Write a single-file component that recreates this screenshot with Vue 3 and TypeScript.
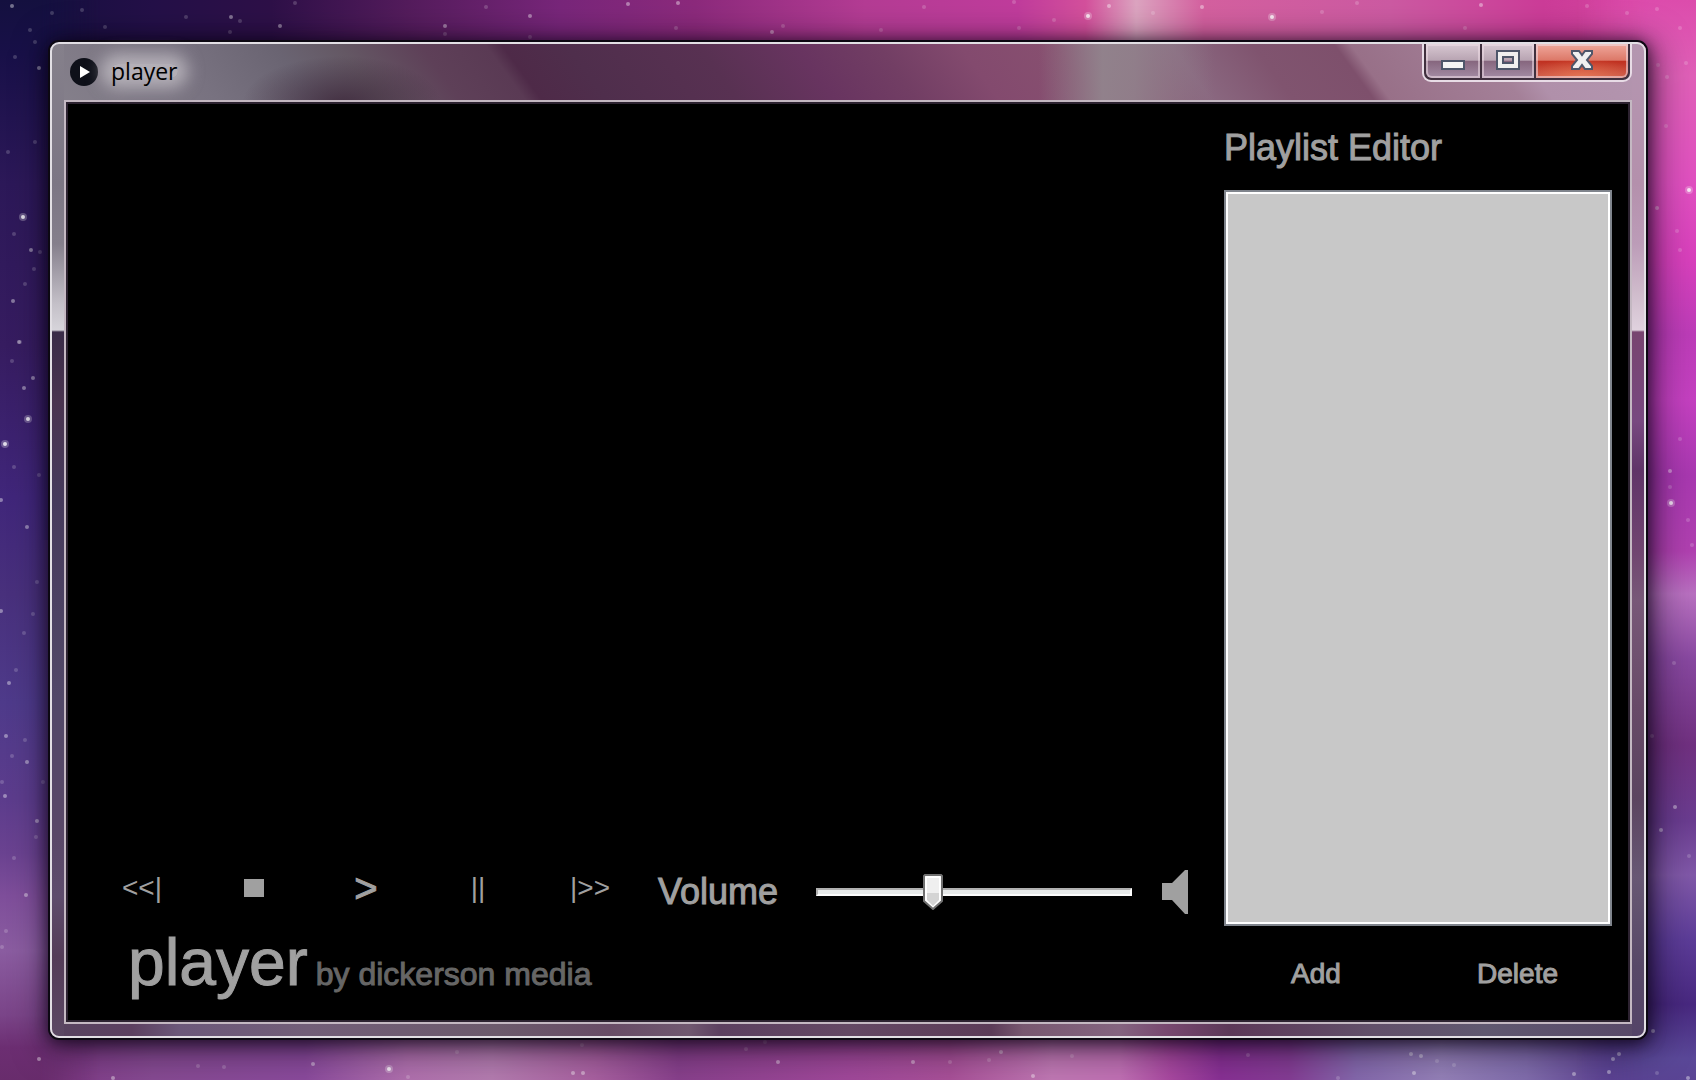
<script setup lang="ts">
import { ref } from 'vue'

interface TransportButton {
  id: string
  label: string
  glyph: string
}

const transport: TransportButton[] = [
  { id: 'previous', label: 'Previous', glyph: '<<|' },
  { id: 'stop', label: 'Stop', glyph: '' },
  { id: 'play', label: 'Play', glyph: '>' },
  { id: 'pause', label: 'Pause', glyph: '||' },
  { id: 'next', label: 'Next', glyph: '|>>' },
]

const volume = ref<number>(36)
const tracks = ref<string[]>([])

// Wallpaper stars, grouped by brightness: [x, y]
const faintStars: [number, number][] = [
  [52, 13], [82, 10], [105, 27], [186, 17], [240, 21], [230, 32], [295, 3], [445, 34], [486, 7], [530, 37],
  [15, 57], [35, 42], [30, 30], [35, 142], [8, 152], [14, 234], [40, 252], [34, 269], [25, 284], [20, 342],
  [676, 28], [783, 26], [881, 30], [924, 7], [1014, 2], [1054, 20], [1019, 28], [1153, 13], [1322, 12],
  [1357, 3], [1465, 28], [1587, 6], [1627, 13], [1657, 9], [1680, 28], [1658, 65], [1667, 77], [1686, 63],
  [1666, 126], [1677, 231], [1680, 250], [12, 361], [14, 467], [39, 475], [37, 582], [33, 614], [24, 633],
  [16, 670], [25, 740], [12, 756], [2, 782], [43, 782], [36, 837], [14, 858], [6, 931], [2, 947],
  [1680, 439], [1670, 487], [1688, 520], [1692, 545], [1674, 663], [1652, 736], [1689, 856],
  [198, 1066], [224, 1067], [408, 1077], [582, 1045], [746, 1049], [765, 1042], [457, 1052],
  [989, 1060], [950, 1062], [1072, 1056], [1248, 1055], [1437, 1061], [1454, 1065], [1338, 1078], [1657, 1073],
]
const clearStars: [number, number][] = [
  [12, 6], [280, 26], [530, 16], [39, 68], [31, 250], [628, 4], [678, 3], [1202, 7], [1657, 208], [19, 342],
  [33, 378], [24, 388], [27, 527], [9, 683], [6, 736], [27, 762], [5, 796], [37, 821], [1670, 471],
  [1675, 807], [1653, 1031], [113, 1078], [313, 1064], [573, 1073], [583, 1073], [913, 1062], [1033, 1076],
  [1411, 1054], [1421, 1056], [1414, 1073], [1574, 1074], [1609, 1072], [1613, 1059], [1619, 1054], [1688, 1078],
  [26, 895], [39, 1059], [778, 1062], [1001, 1052], [1661, 830], [1, 500], [1, 611], [772, 32], [1109, 6],
  [231, 17], [445, 26], [13, 301], [1481, 5],
]
const brightStars: [number, number][] = [
  [23, 217], [28, 419], [5, 444], [1088, 16], [1272, 17], [1689, 190], [1671, 503], [389, 1069],
]
</script>

<template>
  <div class="desktop">
    <div class="wallpaper" aria-hidden="true">
      <div class="sky sky-bottom"></div>
      <div class="sky sky-left"></div>
      <div class="sky sky-right"></div>
      <svg class="stars" viewBox="0 0 1696 1080" preserveAspectRatio="xMidYMid slice">
        <g fill="#fff" opacity=".18">
          <circle v-for="([x, y], i) in faintStars" :key="i" :cx="x" :cy="y" r="2" />
        </g>
        <g fill="#fff" opacity=".4">
          <circle v-for="([x, y], i) in clearStars" :key="i" :cx="x" :cy="y" r="2" />
        </g>
        <g fill="#fff">
          <circle v-for="([x, y], i) in brightStars" :key="i" :cx="x" :cy="y" r="4" opacity=".25" />
          <circle v-for="([x, y], i) in brightStars" :key="i" :cx="x" :cy="y" r="2" opacity=".8" />
        </g>
      </svg>
    </div>

    <main class="window">
      <header class="titlebar">
        <svg class="app-icon" viewBox="0 0 28 28" aria-hidden="true">
          <circle cx="14" cy="14" r="14" fill="#0e1019" />
          <path d="M10 8 20 14 10 20Z" fill="#fff" />
        </svg>
        <h1 class="title">player</h1>
        <div class="caption">
          <button class="cap cap-min" type="button" aria-label="Minimize">
            <svg viewBox="0 0 24 20"><rect x="1" y="11" width="22" height="8" fill="#f4f4f4" stroke="#4e566a" stroke-width="2" /></svg>
          </button>
          <button class="cap cap-max" type="button" aria-label="Maximize">
            <svg viewBox="0 0 24 20">
              <path d="M1 1h22v18H1ZM7 7v6h10V7Z" fill="#f0f0f0" fill-rule="evenodd" stroke="#4e566a" stroke-width="2" />
            </svg>
          </button>
          <button class="cap cap-close" type="button" aria-label="Close">
            <svg viewBox="0 0 24 20">
              <path d="M2 1H9L12 5 15 1h7v3l-5 6 5 6v3h-7l-3-4-3 4H2v-3l5-6-5-6Z" fill="#f0f0f0" stroke="#4e566a" stroke-width="2" />
            </svg>
          </button>
        </div>
      </header>

      <div class="client">
        <section class="deck">
          <div class="screen"></div>
          <div class="controls">
            <div class="transport">
              <button
                v-for="b in transport"
                :key="b.id"
                type="button"
                :class="['key', 'key-' + b.id]"
                :aria-label="b.label"
              >
                <template v-if="b.glyph">{{ b.glyph }}</template>
                <span v-else class="stop-mark"></span>
              </button>
            </div>
            <label class="volume-label" for="volume">Volume</label>
            <input id="volume" v-model.number="volume" class="volume" type="range" min="0" max="100" />
            <svg class="speaker" viewBox="0 0 26 44" aria-hidden="true">
              <path d="M0 13h10L23 0h3v44h-3L10 30H0Z" fill="#a0a0a0" />
            </svg>
          </div>
          <p class="brand">
            <span class="brand-name">player</span>
            <span class="brand-by">by dickerson media</span>
          </p>
        </section>

        <section class="playlist">
          <label class="heading" for="tracks">Playlist Editor</label>
          <select id="tracks" class="tracks" size="12">
            <option v-for="t in tracks" :key="t">{{ t }}</option>
          </select>
          <div class="actions">
            <button class="action" type="button">Add</button>
            <button class="action" type="button">Delete</button>
          </div>
        </section>
      </div>
    </main>
  </div>
</template>

<style>
body {
  margin: 0;
  background: #14103f;
}
</style>

<style scoped>
* {
  box-sizing: border-box;
}

.desktop {
  position: relative;
  display: flex;
  min-height: 100vh;
  padding: 42px 50px;
  font-family: "Liberation Sans", Arial, sans-serif;
  color: #a0a0a0;
}

button {
  margin: 0;
  padding: 0;
  border: 0;
  background: none;
  color: inherit;
  font-family: inherit;
}

/* Wallpaper */
.wallpaper {
  position: absolute;
  inset: 0;
  overflow: hidden;
  background: linear-gradient(90deg, #14103f 0%, #241048 9%, #2e1048 16%, #541c5c 24%, #78267a 33%, #8c2a7c 41%, #b43c94 51%, #c03c9c 60%, #d4509c 64%, #dca4c0 67%, #d4609f 71%, #cc5aa2 82%, #cc3c98 91%, #da4aa6 100%);
}

.sky {
  position: absolute;
}

.sky-bottom {
  inset: 50% 0 0;
  background: linear-gradient(90deg, #6e3075 0%, #803c88 4%, #864a92 9%, #8a4a9c 18%, #b070ae 24%, #b47cb0 29%, #a860a0 35%, #88408c 40%, #a0489a 50%, #a85098 56%, #c078b4 62%, #c070b4 66%, #a848a0 69%, #883094 72%, #843c94 76%, #8468ac 80%, #9480b8 85%, #806cac 90%, #5c4090 95%, #5c3c8c 100%);
}

.sky-left {
  inset: 0 auto 0 0;
  width: 100px;
  background: linear-gradient(180deg, #14103f 0%, #181048 5%, #2c1858 17%, #361c60 32%, #40267a 46%, #48307c 55%, #4e3a8a 65%, #5c3c8c 74%, #6a4290 79%, #7e4e9a 83%, #8a5ca0 88%, #7a4488 94%, #6c2e72 97%, #682c6c 100%);
  mask-image: linear-gradient(90deg, #000 40%, transparent);
}

.sky-right {
  inset: 0 0 0 auto;
  width: 120px;
  background: linear-gradient(180deg, #dc4cac 0%, #e060b8 7%, #e050c0 17%, #d840bc 24%, #bc3cb8 31%, #c440c0 37%, #a838b0 44%, #b040b0 51%, #b870c0 55%, #8848a0 61%, #703080 69%, #6a3c90 76%, #8058a8 81%, #5c3c98 87%, #482880 93%, #5a4898 98%, #5a4494 100%);
  mask-image: linear-gradient(270deg, #000 40%, transparent);
}

.stars {
  position: absolute;
  inset: 0;
  width: 100%;
  height: 100%;
}

/* Window frame */
.window {
  position: relative;
  display: flex;
  flex: 1;
  flex-direction: column;
  padding: 0 12px 12px;
  border: 2px solid #e2dfe4;
  border-radius: 9px;
  background:
    linear-gradient(180deg, #85808b 0, #7c7684 140px, #857f8c 200px, #c4c0c8 260px, #d6d4da 286px, #3a2c48 288px, #4a3450 36%, #463a5c 46%, #524868 66%, #5a4868 80%, #5e4c6c 86%, #543c58 92%, #5c4864 100%) 0 0 / 12px 100% no-repeat,
    linear-gradient(180deg, #b496b0 0, #b490ac 140px, #bc9cb8 200px, #d0bccc 250px, #e0d2de 286px, #784470 288px, #784880 38%, #603468 43%, #704470 51%, #785878 56%, #684a68 67%, #5c4460 76%, #685874 84%, #584868 93%, #544468 100%) 100% 0 / 12px 100% no-repeat,
    radial-gradient(ellipse 100px 48px at 290px 60px, rgba(52, 28, 48, .7), transparent) 0 0 / 100% 56px no-repeat,
    linear-gradient(90deg, transparent 62%, rgba(146, 134, 142, .9) 66%, rgba(146, 134, 142, .8) 68%, transparent 73%) 0 0 / 100% 56px no-repeat,
    linear-gradient(54deg, #85808b 0%, #787280 10%, #6a6472 16%, #645864 20%, #5e4058 25%, #5a3a54 29%, #4e2a48 30%, #4f2e4c 34%, #583152 42%, #683460 48%, #723e64 53%, #834a6e 58%, #885070 64%, #8a6880 71%, #80546f 76%, #7e506c 81%, #987088 82%, #a48098 90%, #b090aa 92%, #b496b0 100%) 0 0 / 100% 56px no-repeat,
    linear-gradient(90deg, #584460 0%, #5c4060 5%, #6c587a 8%, #725e78 16%, #6c5a6c 28%, #684c66 35%, #705870 40%, #5c4060 42%, #644864 50%, #5c3c58 59%, #785870 61%, #846480 67%, #784870 70%, #5c3858 74%, #62506a 83%, #605870 90%, #584868 100%);
  box-shadow:
    0 0 0 2px #0c0812,
    0 2px 16px 2px rgba(8, 0, 16, .7),
    4px 6px 36px 4px rgba(8, 0, 16, .6);
}

.titlebar {
  display: flex;
  height: 56px;
  padding-left: 6px;
}

.app-icon {
  width: 28px;
  height: 28px;
  margin-top: 14px;
}

.title {
  position: relative;
  z-index: 0;
  align-self: flex-start;
  margin: 11px 0 0 13px;
  color: #000;
  font: 400 23px/32px "Open Sans", "Noto Sans", sans-serif;
}

.title::before {
  position: absolute;
  z-index: -1;
  inset: 9px 0;
  border-radius: 12px;
  background: rgba(226, 222, 226, .55);
  box-shadow: 0 0 16px 10px rgba(226, 222, 226, .55);
  content: "";
}

.caption {
  display: flex;
  height: 38px;
  margin-left: auto;
  border: 2px solid #e8dce6;
  border-top: 0;
  border-radius: 0 0 9px 9px;
  background: #40303e;
  padding: 0 2px 2px;
  gap: 2px;
}

.cap {
  display: flex;
  align-items: center;
  justify-content: center;
  padding-bottom: 2px;
  box-shadow: inset 0 0 0 2px rgba(240, 222, 232, .55);
  background: linear-gradient(180deg, #d8c8d2 0%, #b8a4b2 48%, #86667e 50%, #a48ca4 100%);
}

.cap svg {
  width: 24px;
  height: 20px;
}

.cap-min {
  width: 54px;
  border-bottom-left-radius: 6px;
}

.cap-max {
  width: 52px;
}

.cap-close {
  width: 92px;
  border-bottom-right-radius: 6px;
  background: radial-gradient(ellipse 60% 60% at 50% 100%, rgba(240, 130, 90, .7), transparent), linear-gradient(180deg, #f0a89c 0%, #dc7868 48%, #c03020 50%, #cc5c4c 100%);
}

/* Client area */
.client {
  display: grid;
  flex: 1;
  grid-template-columns: minmax(0, 1fr) 388px;
  padding-right: 18px;
  border: 2px solid #c4b8c2;
  background: #000;
  box-shadow: inset 0 0 0 2px #2c2230;
}

.deck {
  display: flex;
  flex-direction: column;
  padding: 0 36px 28px 20px;
}

.screen {
  flex: 1;
}

.controls {
  display: flex;
  align-items: center;
  height: 48px;
}

.transport {
  display: grid;
  grid-template-columns: repeat(5, 112px);
  align-self: flex-start;
  margin-right: 12px;
}

.key {
  display: flex;
  align-items: center;
  justify-content: center;
  height: 40px;
  font-size: 28px;
  line-height: 32px;
}

.key-play {
  font-size: 40px;
  -webkit-text-stroke: 1px;
}

.stop-mark {
  width: 20px;
  height: 18px;
  background: #a0a0a0;
}

.volume-label,
.heading {
  font-size: 36px;
  line-height: 40px;
  -webkit-text-stroke: 1px;
}

.volume-label {
  width: 158px;
}

.volume {
  flex: 1;
  min-width: 0;
  height: 36px;
  margin: 0 30px 0 0;
  background: none;
  appearance: none;
}

.volume::-webkit-slider-runnable-track {
  height: 8px;
  border: 2px solid;
  border-color: #b0b0b0 #fcfcfc #fcfcfc #b0b0b0;
  background: #e7eaea;
}

.volume::-webkit-slider-thumb {
  width: 20px;
  height: 36px;
  margin-top: -16px;
  border: 0;
  background: url("data:image/svg+xml,%3Csvg xmlns='http://www.w3.org/2000/svg' viewBox='0 0 20 36'%3E%3Cpath d='M2 1h16l1 1v25l-9 8-9-8V2Z' fill='%23fff' stroke='%23707070' stroke-width='2'/%3E%3Cpath d='M4 4h12v15H4Z' fill='%23efefef'/%3E%3Cpath d='M4 19h12v7l-6 6-6-6Z' fill='%23d4d4d4'/%3E%3C/svg%3E") center / 20px 36px no-repeat;
  appearance: none;
}

.speaker {
  width: 26px;
  height: 44px;
}

.brand {
  display: flex;
  align-items: baseline;
  gap: 8px;
  margin: 14px 0 0;
  padding-left: 42px;
  -webkit-text-stroke: 1px;
}

.brand-name {
  font-size: 66px;
  line-height: 64px;
}

.brand-by {
  color: #666;
  font-size: 32px;
  line-height: 40px;
}

.playlist {
  display: flex;
  flex-direction: column;
  padding: 26px 0 32px;
}

.heading {
  margin-bottom: 22px;
}

.tracks {
  flex: 1;
  width: 100%;
  border: 2px solid #7f848c;
  border-radius: 0;
  outline: 0;
  background: #c8c8c8;
  box-shadow: inset 0 0 0 2px #fff;
  appearance: none;
}

.actions {
  display: flex;
  justify-content: space-between;
  padding: 32px 54px 0 67px;
}

.action {
  font-size: 28px;
  line-height: 32px;
  -webkit-text-stroke: 1px;
}
</style>
